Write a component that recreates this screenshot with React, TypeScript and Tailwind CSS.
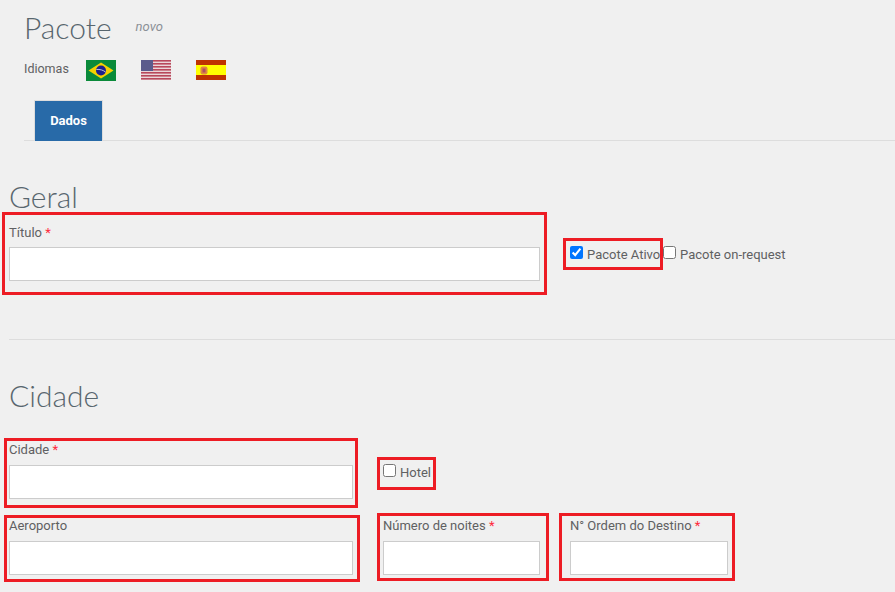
const box = 'border-[3px] border-[#ed1c24]';
const input = 'block h-[34px] border border-[#cccccc] bg-white';
const label = 'block text-[13px] leading-[16px] text-[#5f6062]';
const heading = "font-['Lato'] font-light text-[30px] leading-[36px] text-[#58666e]";

function Required() {
  return <span className="text-[#ff2a3c]"> *</span>;
}

function FlagBrazil() {
  return (
    <svg width="30" height="21" viewBox="0 0 30 21">
      <rect width="30" height="21" fill="#0a8a3a" />
      <path d="M15 2.5 27.5 10.5 15 18.5 2.5 10.5Z" fill="#f5d000" />
      <circle cx="15" cy="10.5" r="5" fill="#1f1f8c" />
      <path d="M10.4 9.5c3.4-.4 6.8.6 9.2 2.6" stroke="#e8e8f0" strokeWidth="0.8" fill="none" />
    </svg>
  );
}

function FlagUsa() {
  const stripes = [0, 3, 6, 9, 12, 15, 18];
  return (
    <svg width="30" height="20" viewBox="0 0 30 20">
      <rect width="30" height="20" fill="#ead6d9" />
      {stripes.map(y => (
        <rect key={y} y={y} width="30" height="1.6" fill="#b8485c" />
      ))}
      <rect width="12" height="11" fill="#5b5b8c" />
    </svg>
  );
}

function FlagSpain() {
  return (
    <svg width="30" height="20" viewBox="0 0 30 20">
      <rect width="30" height="20" fill="#bf3300" />
      <rect y="5" width="30" height="10" fill="#ffff00" />
      <rect x="4.5" y="6.5" width="7" height="8" rx="2" fill="#e08a40" />
      <rect x="6.5" y="8.5" width="3" height="4" fill="#b05060" />
    </svg>
  );
}

export default function App() {
  return (
    <div className="h-[592px] w-[895px] overflow-hidden bg-[#f0f0f0] font-['Roboto',sans-serif]">
      {/* CABECALHO */}
      <div className="pt-[9px] pl-[24px]">
        <div className="flex items-start">
          <h1 className={`${heading} text-[#7a8793]`}>Pacote</h1>
          <span className="ml-[24px] mt-[9px] text-[13px] italic leading-[18px] text-[#8a8f96]">novo</span>
        </div>
        <div className="mt-[13px] flex h-[24px] items-center">
          <span className="mt-[-2px] w-[62px] text-[12.5px] text-[#5f6062]">Idiomas</span>
          <div className="flex gap-[25px]">
            <FlagBrazil />
            <FlagUsa />
            <FlagSpain />
          </div>
        </div>

        {/* ABAS */}
        <div className="mt-[18px] flex h-[41px] border-b border-[#dddddd] pl-[10px]">
          <div className="flex h-[41px] w-[69px] shrink-0 items-center justify-center border border-b-0 border-[#dddddd] bg-[#286aa8] text-[13px] font-bold text-white">
            Dados
          </div>
        </div>
      </div>

      {/* GERAL */}
      <h2 className={`${heading} mt-[37px] ml-[9px] h-[34px]`}>Geral</h2>
      <div className="ml-[2px] flex items-center">
        <div className={`${box} h-[83px] w-[545px] px-[4px] pt-[10px]`}>
          <label className={label}>Título<Required /></label>
          <div className={`${input} mt-[6px] w-[531px]`} />
        </div>
        <div className="ml-[16px] flex items-center whitespace-nowrap text-[13px] text-[#5f6062]">
          <label className={`${box} flex h-[32px] w-[100px] items-center pl-[4px]`}>
            <input type="checkbox" defaultChecked className="m-0 mt-[-2px] h-[13px] w-[13px]" />
            <span className="ml-[4px] pt-[2px]">Pacote Ativo</span>
          </label>
          <label className="flex items-center">
            <input type="checkbox" className="m-0 mt-[-2px] h-[13px] w-[13px]" />
            <span className="ml-[4px] pt-[2px]">Pacote on-request</span>
          </label>
        </div>
      </div>

      <div className="mt-[44px] ml-[9px] border-t border-[#dddddd]" />

      {/* CIDADE */}
      <h2 className={`${heading} mt-[37px] ml-[9px] h-[40px]`}>Cidade</h2>
      <div className="mt-[21px] ml-[4px] flex flex-col">
        <div className="flex items-center">
          <div className={`${box} h-[70px] w-[354px] pl-[2px] pt-[1px]`}>
            <label className={label}>Cidade<Required /></label>
            <div className={`${input} mt-[7px] w-[344px]`} />
          </div>
          <label className={`${box} ml-[19px] flex h-[33px] w-[59px] items-center whitespace-nowrap pl-[3px] text-[13px] text-[#5f6062]`}>
            <input type="checkbox" className="m-0 mt-[-5px] h-[13px] w-[13px]" />
            <span className="ml-[4px]">Hotel</span>
          </label>
        </div>
        <div className="mt-[5px] flex items-start">
          <div className={`${box} mt-[2px] h-[67px] w-[356px] pl-[2px]`}>
            <label className={label}>Aeroporto</label>
            <div className={`${input} mt-[7px] w-[344px]`} />
          </div>
          <div className={`${box} ml-[17px] h-[68px] w-[172px] pl-[3px] pt-[2px]`}>
            <label className={label}>Número de noites<Required /></label>
            <div className={`${input} mt-[7px] w-[157px]`} />
          </div>
          <div className={`${box} ml-[10px] h-[68px] w-[176px] pl-[8px] pt-[2px]`}>
            <label className={label}>N° Ordem do Destino<Required /></label>
            <div className={`${input} mt-[7px] w-[158px]`} />
          </div>
        </div>
      </div>
    </div>
  );
}
